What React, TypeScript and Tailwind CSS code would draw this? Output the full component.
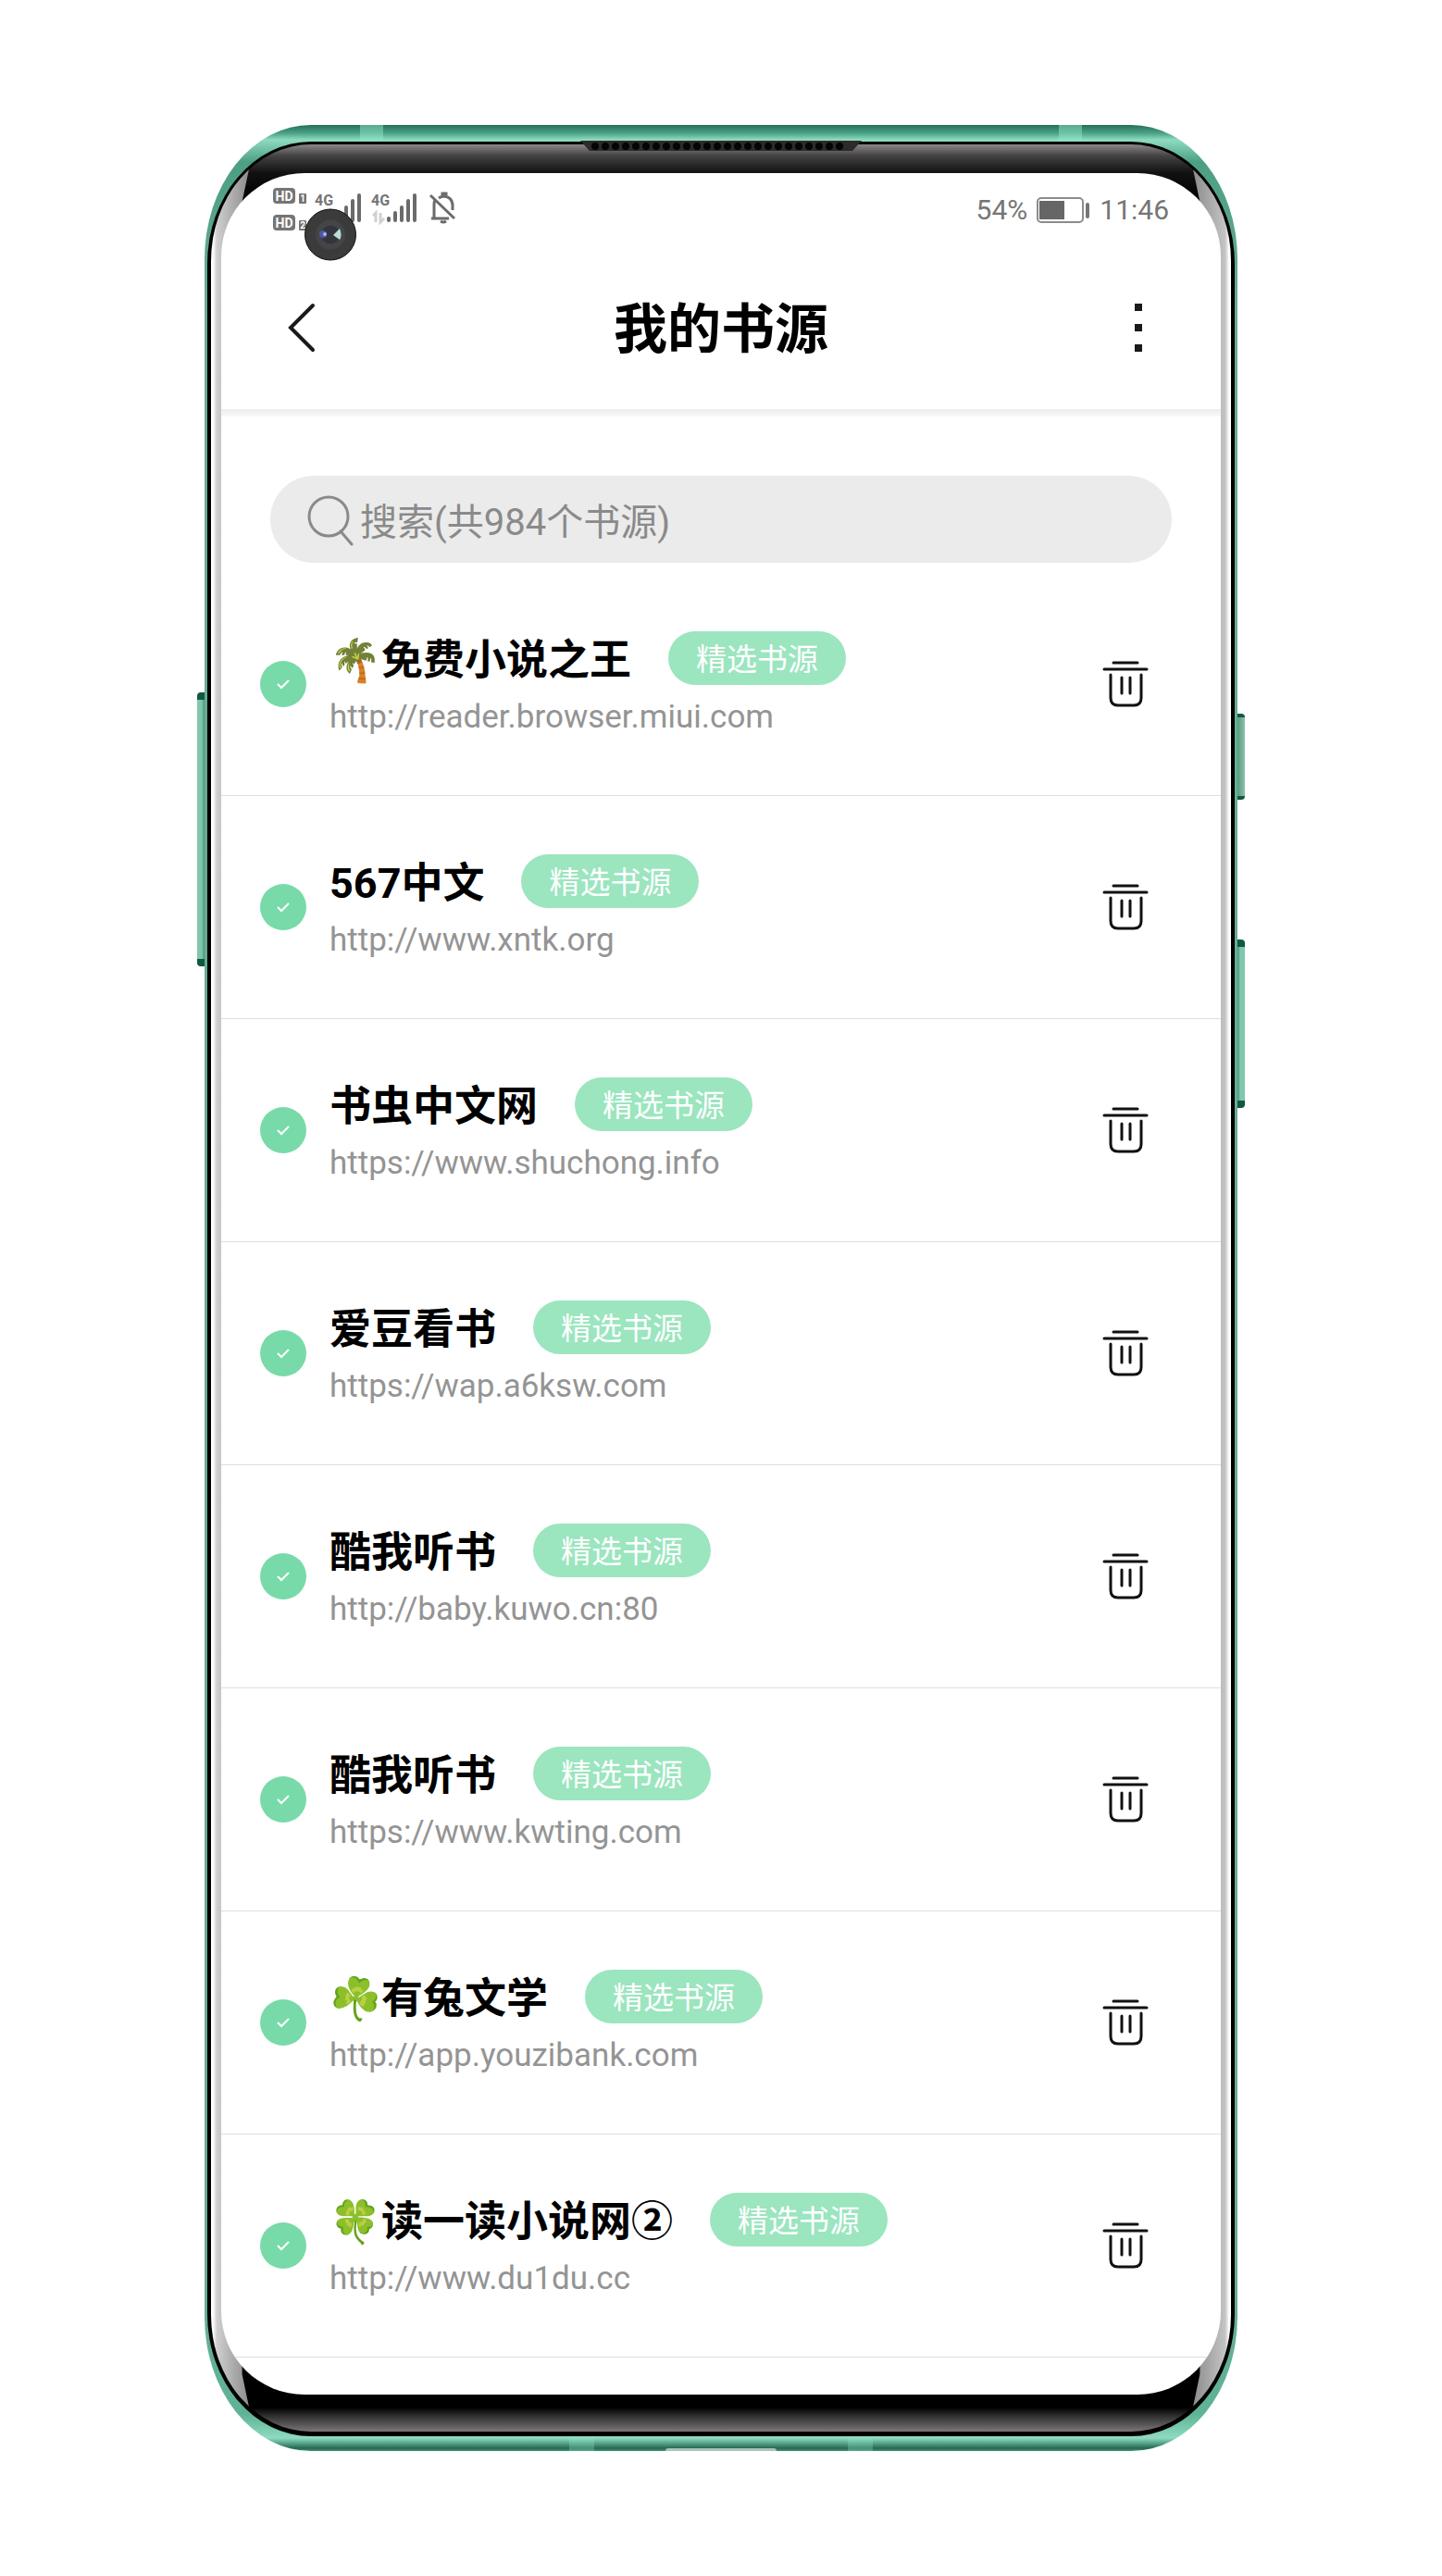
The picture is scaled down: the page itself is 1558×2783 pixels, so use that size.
import { useState } from "react";

type Source = { name: string; url: string };

const sources: Source[] = [
  { name: "🌴免费小说之王", url: "http://reader.browser.miui.com" },
  { name: "567中文", url: "http://www.xntk.org" },
  { name: "书虫中文网", url: "https://www.shuchong.info" },
  { name: "爱豆看书", url: "https://wap.a6ksw.com" },
  { name: "酷我听书", url: "http://baby.kuwo.cn:80" },
  { name: "酷我听书", url: "https://www.kwting.com" },
  { name: "☘️有兔文学", url: "http://app.youzibank.com" },
  { name: "🍀读一读小说网②", url: "http://www.du1du.cc" },
];

function SignalIcons() {
  return (
    <svg width="200" height="50" viewBox="0 0 200 50" fill="none" aria-hidden="true">
      <g fill="#757575" fontFamily="Roboto, sans-serif">
        <rect x="0" y="0" width="24" height="17" rx="4" />
        <rect x="0" y="29" width="24" height="17" rx="4" />
        <rect x="28" y="6" width="8" height="11" rx="1" />
        <rect x="28" y="35" width="8" height="11" rx="1" />
        <text x="12" y="14" textAnchor="middle" fontSize="14" fontWeight="700" fill="#fff">HD</text>
        <text x="12" y="43" textAnchor="middle" fontSize="14" fontWeight="700" fill="#fff">HD</text>
        <text x="32" y="15" textAnchor="middle" fontSize="10" fontWeight="700" fill="#fff">1</text>
        <text x="32" y="44" textAnchor="middle" fontSize="10" fontWeight="700" fill="#fff">2</text>
        <text x="45" y="19" fontSize="16" fontWeight="700">4G</text>
        <text x="106" y="19" fontSize="16" fontWeight="700">4G</text>
      </g>
      <path d="M79 21v14M86 14v21M93 8v27M125 33v2M132 27v8M139 21v14M146 14v21M153 8v27" stroke="#6b6b6b" strokeWidth="4" strokeLinecap="round" />
      <path d="M108 30l3-3v10M116 27v10l4-4" stroke="#d0d0d0" strokeWidth="3" />
      <path d="M170 8l26 25M171 33h19M174 32V18q0-3 1-5M179 11q3-2 6-2 8 1 9 9v6M183 8V6h4v2M181 36q3 2 6 0" stroke="#6b6b6b" strokeWidth="3" />
    </svg>
  );
}

function StatusBar() {
  return (
    <div className="flex h-[78px] items-start justify-between pl-14 pr-14 pt-4">
      <SignalIcons />
      <div className="flex h-12 items-center gap-[10px] text-[30px] leading-none text-[#757575]">
        <span>54%</span>
        <svg width="58" height="28" viewBox="0 0 58 28" aria-hidden="true">
          <rect x="1" y="1" width="49" height="26" rx="4" fill="none" stroke="#8c8c8c" strokeWidth="2" />
          <rect x="3" y="4" width="27" height="20" fill="#666" />
          <rect x="53" y="6" width="4" height="17" rx="2" fill="#757575" />
        </svg>
        <span>11:46</span>
      </div>
    </div>
  );
}

function Header() {
  return (
    <header className="flex h-[177px] items-center justify-between px-[65px]">
      <button type="button" aria-label="返回" className="flex h-16 w-12 items-center">
        <svg width="40" height="54" viewBox="0 0 40 54" fill="none" aria-hidden="true">
          <path d="M34 3L10 27l24 24" stroke="#1a1a1a" strokeWidth="4" strokeLinecap="round" />
        </svg>
      </button>
      <h1 className="pt-1 text-[58px] font-bold leading-none">我的书源</h1>
      <button type="button" aria-label="更多" className="flex h-16 w-12 flex-col items-center justify-center gap-[14px]">
        <span className="size-2 bg-[#1a1a1a]" />
        <span className="size-2 bg-[#1a1a1a]" />
        <span className="size-2 bg-[#1a1a1a]" />
      </button>
    </header>
  );
}

function SearchBox() {
  return (
    <label className="mx-[53px] mt-16 flex h-[94px] items-center rounded-full bg-[#ebebeb] pl-10">
      <svg width="54" height="60" viewBox="0 0 54 60" fill="none" stroke="#8a8a8a" strokeWidth="3" aria-hidden="true">
        <circle cx="23" cy="27" r="21" />
        <path d="M36 43l12 14" strokeLinecap="round" />
      </svg>
      <input
        type="text"
        aria-label="搜索书源"
        placeholder="搜索(共984个书源)"
        className="h-[94px] min-w-0 flex-1 bg-transparent pl-[3px] pt-[6px] text-[40px] outline-none placeholder:text-[#8a8a8a]"
      />
    </label>
  );
}

function SourceRow({ name, url }: Source) {
  const [enabled, setEnabled] = useState(true);

  return (
    <li className="flex h-[241px] items-center border-b border-[#dedede] pl-[42px] pr-[73px]">
      <label className="relative flex size-[50px] shrink-0 items-center justify-center">
        <input
          type="checkbox"
          aria-label={name}
          checked={enabled}
          onChange={(e) => setEnabled(e.target.checked)}
          className="absolute size-full appearance-none rounded-full bg-gray-200 checked:bg-[#78daa8]"
        />
        <svg width="14" height="12" viewBox="0 0 14 12" fill="none" className="relative" aria-hidden="true">
          <path d="M1 6l4 4 8-8" stroke="#fff" strokeWidth="2" />
        </svg>
      </label>
      <div className="ml-[25px] min-w-0 flex-1">
        <div className="flex h-[58px] items-center gap-10 whitespace-nowrap">
          <h2 className="pt-[6px] text-[45px] font-bold leading-[52px]">{name}</h2>
          <span className="rounded-full bg-[#9be5bf] px-[30px] pt-1 text-[33px] leading-[54px] text-white">精选书源</span>
        </div>
        <a href={url} className="mt-[14px] block text-[35px] leading-[42px] text-[#949494]">{url}</a>
      </div>
      <button type="button" aria-label={`删除 ${name}`} className="flex h-16 w-[60px] items-center justify-center">
        <svg width="52" height="52" viewBox="0 0 52 52" fill="none" stroke="#111" strokeWidth="3" strokeLinecap="round" aria-hidden="true">
          <path d="M13 3h26M3 10h46M10 16v25q0 8 8 8h17q8 0 8-8V16M22 19v17M31 19v17" />
        </svg>
      </button>
    </li>
  );
}

function Camera() {
  return (
    <svg className="absolute left-[90px] top-[38px]" width="56" height="57" viewBox="0 0 56 57" aria-hidden="true">
      <circle cx="28" cy="28.5" r="27.5" fill="#3b3b3b" stroke="#111" />
      <circle cx="28" cy="28.5" r="16" fill="#454548" />
      <circle cx="28" cy="28.5" r="10" fill="#33353c" />
      <ellipse cx="20" cy="28" rx="4" ry="4" fill="#4c56a8" />
      <circle cx="22" cy="28" r="2" fill="#a9b4ee" />
      <path d="M31 29l7-7q3 7 0 12z" fill="#b9dcdc" />
    </svg>
  );
}

function Speaker() {
  const holes = Array.from({ length: 25 }, (_, i) => 16 + i * 11);
  return (
    <svg className="absolute left-1/2 top-[17px] -translate-x-1/2" width="304" height="12" viewBox="0 0 304 12" aria-hidden="true">
      <path d="M0 0h304l-10 11H10z" fill="#2c2a2a" />
      {holes.map((x) => (
        <circle key={x} cx={x} cy="6" r="4" fill="#050505" />
      ))}
    </svg>
  );
}

function Phone({ children }: { children: React.ReactNode }) {
  return (
    <div className="relative mx-auto w-full max-w-[1116px]">
      {/* side keys */}
      <div className="absolute -left-2 top-[613px] h-[296px] w-[10px] rounded-l-sm border-y-8 border-[#0e5a41] bg-linear-to-r from-[#7fc7ad] from-50% to-[#1b7355]" />
      <div className="absolute -right-2 top-[636px] h-[93px] w-[10px] rounded-r-sm border-y-4 border-[#0e5a41] bg-linear-to-l from-[#8fbfac] to-[#3f9475]" />
      <div className="absolute -right-2 top-[880px] h-[182px] w-[10px] rounded-r-sm border-y-8 border-[#0e5a41] bg-linear-to-l from-[#7fc7ad] from-50% to-[#1b7355]" />

      <div className="relative overflow-hidden rounded-[115px/145px] bg-[linear-gradient(to_bottom,#256f58_0,#4ba388_9px,#8edbc0_16px,#4c9f83_40px,#69ab94_200px,#69ab94_calc(100%-200px),#5fb394_calc(100%-40px),#8edbc0_calc(100%-14px),#226a52_calc(100%-3px),#4d9079_100%)] px-[3px] pb-4 pt-[18px]">
        <div className="absolute left-[168px] top-0 h-[17px] w-[25px] bg-[#8fe5c8]/50" />
        <div className="absolute right-[168px] top-0 h-[17px] w-[25px] bg-[#8fe5c8]/50" />
        <div className="absolute bottom-0 left-[394px] h-4 w-[27px] bg-[#8fe5c8]/30" />
        <div className="absolute bottom-0 right-[394px] h-4 w-[27px] bg-[#8fe5c8]/30" />
        {/* charging port */}
        <div className="absolute bottom-0 left-1/2 h-[3px] w-[120px] -translate-x-1/2 rounded-t-full bg-[#a9c4ba]" />
        <div className="rounded-[112px/132px] bg-black px-1 pb-[5px] pt-[3px]">
          <div className="relative overflow-hidden rounded-[108px/126px] bg-[linear-gradient(to_bottom,#8c8788_0,#454444_12px,#111_31px,#000_60px,#000_calc(100%-26px),#333_calc(100%-16px),#7c7576_100%)] px-[11px] pb-10 pt-[31px]">
            <div className="absolute inset-y-[22px] left-0 w-[42px] bg-linear-to-r from-white from-5% via-[#cfcfcf] via-15% to-[#8a8a8a] [clip-path:polygon(0_0,100%_0,80%_40px,80%_calc(100%-40px),100%_100%,0_100%)]" />
            <div className="absolute inset-y-[22px] right-0 w-[42px] bg-linear-to-l from-white from-5% via-[#c4c4c4] via-15% to-[#8a8a8a] [clip-path:polygon(0_0,100%_0,100%_100%,0_100%,20%_calc(100%-40px),20%_40px)]" />
            <div className="relative overflow-hidden rounded-[90px] bg-white">{children}</div>
          </div>
        </div>
      </div>
      <Speaker />
    </div>
  );
}

export default function App() {
  return (
    <main className="min-h-screen bg-white pb-[135px] pt-[135px] font-[Roboto,'Noto_Sans_CJK_SC',sans-serif] text-black">
      <Phone>
        <StatusBar />
        <Camera />
        <Header />
        <div className="h-2 bg-linear-to-b from-[#ededed] to-[#f9f9f9]" />
        <SearchBox />
        <ul className="mt-[11px] pb-10">
          {sources.map((s) => (
            <SourceRow key={s.url} {...s} />
          ))}
        </ul>
      </Phone>
    </main>
  );
}
